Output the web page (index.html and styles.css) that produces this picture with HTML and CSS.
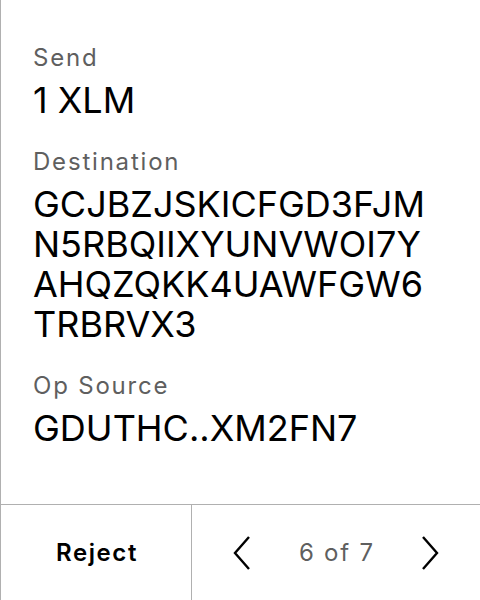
FILE: index.html
```html
<!DOCTYPE html>
<html>
<head>
<meta charset="utf-8">
<link rel="stylesheet" href="styles.css">
</head>
<body>
<div class="screen">
  <main class="details">
    <section class="field">
      <div class="label">Send</div>
      <div class="value">1 XLM</div>
    </section>
    <section class="field">
      <div class="label">Destination</div>
      <div class="value wrap">GCJBZJSKICFGD3FJMN5RBQIIXYUNVWOI7YAHQZQKK4UAWFGW6TRBRVX3</div>
    </section>
    <section class="field">
      <div class="label">Op Source</div>
      <div class="value">GDUTHC..XM2FN7</div>
    </section>
  </main>
  <footer class="footer">
    <button class="reject">Reject</button>
    <div class="pager">
      <svg class="chev" width="18" height="34" viewBox="0 0 18 34"><polyline points="16,1 2,17 16,33" fill="none" stroke="#000" stroke-width="2.4"/></svg>
      <span class="count">6 of 7</span>
      <svg class="chev" width="18" height="34" viewBox="0 0 18 34"><polyline points="2,1 16,17 2,33" fill="none" stroke="#000" stroke-width="2.4"/></svg>
    </div>
  </footer>
</div>
</body>
</html>
```
FILE: styles.css
```css
* { box-sizing: border-box; }
html, body {
  margin: 0;
  padding: 0;
  background: #fff;
}
body {
  font-family: Inter, "Noto Sans", sans-serif;
  color: #000;
}
.screen {
  width: 480px;
  height: 600px;
  display: flex;
  flex-direction: column;
  border-left: 1px solid #b0b0b0;
}
.details {
  flex: 1;
  padding: 42px 32px 0 32px;
  display: flex;
  flex-direction: column;
  gap: 26px;
}
.field {
  display: flex;
  flex-direction: column;
  gap: 6px;
}
.label {
  font-size: 24px;
  line-height: 32px;
  letter-spacing: 1.8px;
  color: #5f5f5f;
}
.value {
  font-size: 36px;
  line-height: 40px;
  color: #000;
}
.wrap {
  max-width: 402px;
  word-break: break-all;
}
.footer {
  height: 96px;
  border-top: 1px solid #b0b0b0;
  display: flex;
}
.reject {
  width: 191px;
  border: none;
  border-right: 1px solid #b0b0b0;
  background: #fff;
  font-family: Inter, "Noto Sans", sans-serif;
  font-size: 24px;
  font-weight: 600;
  letter-spacing: 1.6px;
  color: #000;
  padding: 0 0 0 2px;
  margin: 0;
}
.pager {
  flex: 1;
  display: flex;
  align-items: center;
  justify-content: space-between;
  padding: 0 41px;
}
.count {
  font-size: 24px;
  letter-spacing: 1.8px;
  margin-right: -1.8px;
  color: #5f5f5f;
}
.chev { display: block; }
```
